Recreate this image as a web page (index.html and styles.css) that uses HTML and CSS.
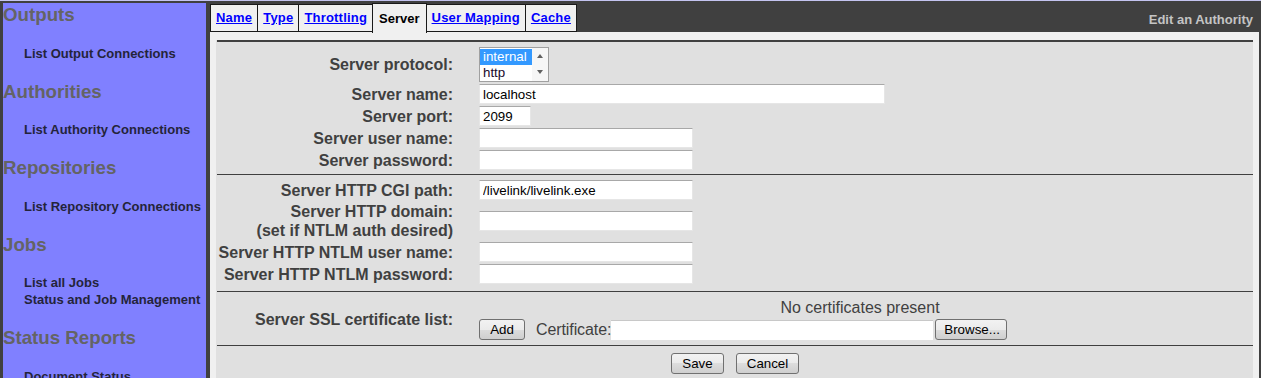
FILE: index.html
```html
<!DOCTYPE html>
<html lang="en">
<head>
  <meta charset="UTF-8" />
  <meta name="viewport" content="width=device-width, initial-scale=1.0"/>
  <title>Edit an Authority</title>
  <link rel="stylesheet" href="styles.css">
</head>
<body>
  <div class="page">
    <nav class="sidebar">
      <h3 class="nav-head">Outputs</h3>
      <ul class="nav-links">
        <li><a href="#">List Output Connections</a></li>
      </ul>
      <h3 class="nav-head">Authorities</h3>
      <ul class="nav-links">
        <li><a href="#">List Authority Connections</a></li>
      </ul>
      <h3 class="nav-head">Repositories</h3>
      <ul class="nav-links">
        <li><a href="#">List Repository Connections</a></li>
      </ul>
      <h3 class="nav-head">Jobs</h3>
      <ul class="nav-links">
        <li><a href="#">List all Jobs</a></li>
        <li><a href="#">Status and Job Management</a></li>
      </ul>
      <h3 class="nav-head">Status Reports</h3>
      <ul class="nav-links">
        <li><a href="#">Document Status</a></li>
        <li><a href="#">Queue Status</a></li>
      </ul>
    </nav>

    <main class="main">
      <div class="tabbar">
        <a class="tab" href="#">Name</a>
        <a class="tab" href="#">Type</a>
        <a class="tab" href="#">Throttling</a>
        <span class="tab tab-active">Server</span>
        <a class="tab" href="#">User Mapping</a>
        <a class="tab" href="#">Cache</a>
        <span class="page-title">Edit an Authority</span>
      </div>

      <div class="frame">
        <div class="panel">
          <!-- Server -->
          <div class="section section-first">
            <label class="label">Server protocol:</label>
            <div class="value">
              <div class="listbox">
                <div class="listbox-options">
                  <div class="option option-selected">internal</div>
                  <div class="option">http</div>
                </div>
                <div class="listbox-scroll">
                  <span class="arrow-up"></span>
                  <span class="arrow-down"></span>
                </div>
              </div>
            </div>

            <label class="label">Server name:</label>
            <div class="value"><input class="field w-long" type="text" value="localhost"></div>

            <label class="label">Server port:</label>
            <div class="value"><input class="field w-short" type="text" value="2099"></div>

            <label class="label">Server user name:</label>
            <div class="value"><input class="field w-mid" type="text"></div>

            <label class="label">Server password:</label>
            <div class="value"><input class="field w-mid" type="password"></div>
          </div>

          <!-- HTTP -->
          <div class="section section-http">
            <label class="label">Server HTTP CGI path:</label>
            <div class="value"><input class="field w-mid" type="text" value="/livelink/livelink.exe"></div>

            <label class="label">Server HTTP domain:<br>(set if NTLM auth desired)</label>
            <div class="value"><input class="field w-mid" type="text"></div>

            <label class="label">Server HTTP NTLM user name:</label>
            <div class="value"><input class="field w-mid" type="text"></div>

            <label class="label">Server HTTP NTLM password:</label>
            <div class="value"><input class="field w-mid" type="password"></div>
          </div>

          <!-- SSL -->
          <div class="section section-ssl">
            <label class="label">Server SSL certificate list:</label>
            <div class="value">
              <div class="cert-empty">No certificates present</div>
              <div class="cert-row">
                <button class="btn btn-add" type="button">Add</button>
                <span class="cert-label">Certificate:</span>
                <span class="file-box"></span>
                <button class="btn btn-browse" type="button">Browse...</button>
              </div>
            </div>
          </div>

          <div class="actions">
            <button class="btn btn-save" type="button">Save</button>
            <button class="btn btn-cancel" type="button">Cancel</button>
          </div>
        </div>
      </div>
    </main>
  </div>
</body>
</html>
```

FILE: styles.css
```css
body {
  margin: 0;
  background-color: #404040;
  border-top: 1px solid #c4c4f0;
  font-family: "Liberation Sans", Arial, sans-serif;
  color: #404040;
  overflow: hidden;
}
.page {
  display: flex;
  gap: 4px;
  padding: 2px 2px 0 3px;
}
.sidebar {
  width: 203px;
  flex-shrink: 0;
  background-color: #8080ff;
  padding-top: 1px;
  min-height: 420px;
}
.nav-head {
  margin: 0;
  font-size: 18.72px;
  line-height: 22px;
  font-weight: bold;
  color: #646464;
}
.nav-links {
  list-style: none;
  margin: 18.5px 0 19px;
  padding: 0 0 0 21px;
  font-size: 13px;
  line-height: 17px;
}
.nav-links a {
  font-weight: bold;
  color: #24243a;
  text-decoration: none;
  white-space: nowrap;
}
.main {
  flex: 1;
  min-width: 0;
}
.tabbar {
  display: flex;
  align-items: flex-end;
  height: 29px;
}
.tab {
  box-sizing: border-box;
  height: 28px;
  line-height: 26px;
  padding: 0 5px;
  margin-right: -1px;
  background-color: #f0f0f0;
  border: 1px solid #1a1a1a;
  font-size: 13px;
  font-weight: bold;
  letter-spacing: 0.2px;
  color: #0000ff;
  text-decoration: underline;
  white-space: nowrap;
}
.tab-active {
  position: relative;
  height: 30px;
  line-height: 30px;
  margin-bottom: -1px;
  padding: 0 6px;
  border-bottom: none;
  letter-spacing: 0;
  color: #000;
  text-decoration: none;
}
.page-title {
  margin-left: auto;
  padding-right: 6px;
  align-self: center;
  padding-top: 3px;
  font-size: 13px;
  font-weight: bold;
  color: #c4c4c4;
}
.frame {
  background-color: #f0f0f0;
  padding: 8px 6px 0 6px;
}
.panel {
  background-color: #e0e0e0;
  padding: 0 0 8px 1px;
}
.section {
  display: grid;
  grid-template-columns: 236px 1fr;
  column-gap: 26px;
  row-gap: 2px;
  align-items: center;
  border-top: 1px solid #404040;
}
.section-first {
  border-top-width: 2px;
  padding: 5px 0 4px;
}
.section-http {
  padding: 5px 0 7px;
}
.section-ssl {
  padding: 6px 0 5px;
}
.label {
  text-align: right;
  font-size: 16px;
  font-weight: bold;
  line-height: 19px;
  white-space: nowrap;
}
.value {
  display: flex;
  flex-direction: column;
  align-items: flex-start;
}
.field {
  box-sizing: border-box;
  height: 20px;
  padding: 0 3px;
  border: 1px solid #e6e6e6;
  border-top-color: #a8a8a8;
  background-color: #fff;
  font-family: "Liberation Sans", Arial, sans-serif;
  font-size: 13.33px;
  color: #000;
  outline: none;
}
.w-long {
  width: 406px;
}
.w-short {
  width: 52px;
}
.w-mid {
  width: 214px;
}
.listbox {
  box-sizing: border-box;
  display: flex;
  width: 70px;
  height: 35px;
  border: 1px solid #a0a0a0;
  background-color: #fff;
}
.listbox-options {
  flex: 1;
  padding-top: 1px;
}
.option {
  height: 16px;
  line-height: 16px;
  padding-left: 3px;
  font-size: 13.33px;
  color: #1a0a2a;
}
.option-selected {
  background-color: #3399ff;
  color: #fff;
}
.listbox-scroll {
  width: 16px;
  background-color: #f6f6f6;
  display: flex;
  flex-direction: column;
  justify-content: space-between;
  align-items: center;
  padding: 6px 0 7px;
  box-sizing: border-box;
}
.arrow-up,
.arrow-down {
  width: 0;
  height: 0;
  border-left: 3px solid transparent;
  border-right: 3px solid transparent;
}
.arrow-up {
  border-bottom: 4px solid #606060;
}
.arrow-down {
  border-top: 4px solid #606060;
}
.cert-empty {
  align-self: stretch;
  text-align: center;
  padding-right: 12px;
  font-size: 16px;
  line-height: 19px;
  margin-bottom: 2px;
}
.cert-row {
  display: flex;
  align-items: center;
}
.cert-label {
  margin-left: 11px;
  font-size: 16px;
  letter-spacing: -0.1px;
}
.file-box {
  box-sizing: border-box;
  width: 322px;
  height: 20px;
  background-color: #fff;
  border-top: 1px solid #c8c8c8;
}
.btn {
  box-sizing: border-box;
  height: 21px;
  padding: 0 8px;
  border: 1px solid #707070;
  border-radius: 3px;
  background: linear-gradient(#f2f2f2, #ebebeb 50%, #dddddd 50%, #cfcfcf);
  font-family: "Liberation Sans", Arial, sans-serif;
  font-size: 13.33px;
  color: #000;
  cursor: pointer;
}
.btn-add {
  width: 46px;
}
.btn-browse {
  width: 72px;
  margin-left: 2px;
}
.btn-save {
  width: 53px;
}
.btn-cancel {
  width: 63px;
}
.actions {
  display: flex;
  justify-content: center;
  gap: 12px;
  border-top: 1px solid #404040;
  padding-top: 7px;
}
```
